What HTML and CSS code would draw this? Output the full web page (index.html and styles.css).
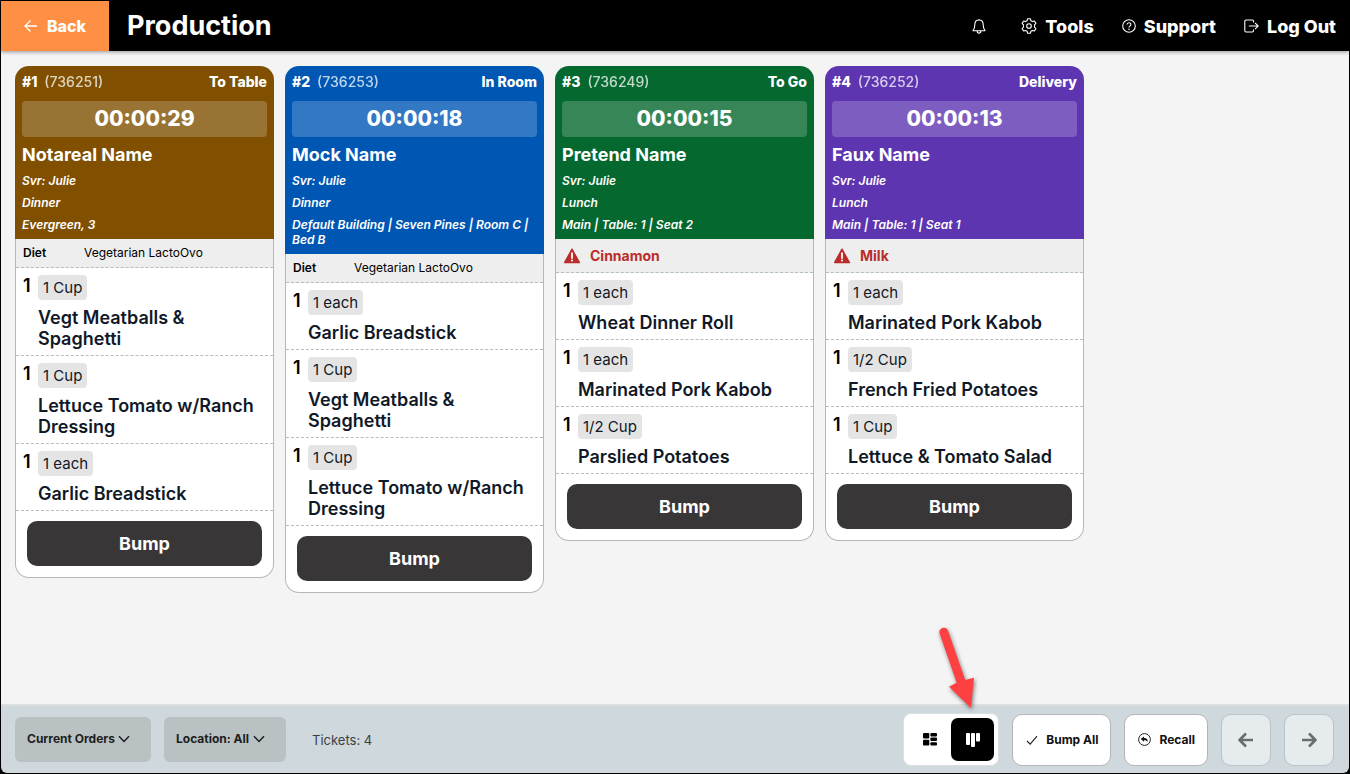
FILE: index.html
```html
<!DOCTYPE html>
<html lang="en">
<head>
    <meta charset="UTF-8">
    <meta name="viewport" content="width=device-width, initial-scale=1.0">
    <title>Production</title>
    <link rel="stylesheet" href="styles.css">
</head>
<body>
    <svg class="sprite" aria-hidden="true">
        <symbol id="warning" viewBox="0 0 18 16">
            <path d="M9 1.2 L16.4 14.6 H1.6 Z" fill="#b92d2b" stroke="#b92d2b" stroke-width="1.4" stroke-linejoin="round"/>
            <path d="M9 5.2 V10" stroke="#fff" stroke-width="1.8" stroke-linecap="round"/>
            <circle cx="9" cy="12.6" r="1" fill="#fff"/>
        </symbol>
        <symbol id="chevron" viewBox="0 0 12 8">
            <path d="M1 1.2 L6 6.4 L11 1.2" fill="none" stroke="#1c1e20" stroke-width="1.5"/>
        </symbol>
    </svg>

    <div class="app">
        <header class="topbar">
            <button class="back-button" type="button">
                <svg width="14" height="14" viewBox="0 0 14 14"><path d="M13 7 H1.5 M6.5 1.5 L1 7 L6.5 12.5" fill="none" stroke="#fff" stroke-width="1.3"/></svg>
                Back
            </button>
            <h1>Production</h1>
            <nav class="nav">
                <a class="bell" href="#" aria-label="Notifications">
                    <svg width="14" height="16" viewBox="0 0 14 16"><path d="M7 1 V2 M1 12.7 C2.4 11.2 2.8 9.8 2.8 6.8 C2.8 3.8 4.6 2 7 2 C9.4 2 11.2 3.8 11.2 6.8 C11.2 9.8 11.6 11.2 13 12.7 Z M5.2 13 C5.2 15.8 8.8 15.8 8.8 13" fill="none" stroke="#fff" stroke-width="1.1" stroke-linejoin="round"/></svg>
                </a>
                <a href="#">
                    <svg width="16" height="16" viewBox="0 0 16 16"><path d="M6.6 0.7 H9.4 L9.9 2.7 L11.5 3.6 L13.4 3 L14.9 5.4 L13.5 6.9 V9.1 L14.9 10.6 L13.4 13 L11.5 12.4 L9.9 13.3 L9.4 15.3 H6.6 L6.1 13.3 L4.5 12.4 L2.6 13 L1.1 10.6 L2.5 9.1 V6.9 L1.1 5.4 L2.6 3 L4.5 3.6 L6.1 2.7 Z" fill="none" stroke="#fff" stroke-width="1.1" stroke-linejoin="round"/><circle cx="8" cy="8" r="2.3" fill="none" stroke="#fff" stroke-width="1.1"/></svg>
                    Tools
                </a>
                <a href="#">
                    <svg width="14" height="14" viewBox="0 0 14 14"><circle cx="7" cy="7" r="6.3" fill="none" stroke="#fff" stroke-width="1.1"/><path d="M5.1 5.6 C5.1 3.1 8.9 3.1 8.9 5.5 C8.9 6.9 7 6.9 7 8.5" fill="none" stroke="#fff" stroke-width="1.1"/><circle cx="7" cy="10.3" r="0.8" fill="#fff"/></svg>
                    Support
                </a>
                <a href="#">
                    <svg width="15" height="14" viewBox="0 0 15 14"><path d="M9.5 3.6 V2.2 Q9.5 1 8.3 1 H2 Q0.8 1 0.8 2.2 V11.8 Q0.8 13 2 13 H8.3 Q9.5 13 9.5 11.8 V10.4 M4.8 7 H14 M11 3.8 L14.2 7 L11 10.2" fill="none" stroke="#fff" stroke-width="1.1"/></svg>
                    Log Out
                </a>
            </nav>
        </header>

        <main class="board">
            <article class="ticket to-table">
                <div class="ticket-head">
                    <div class="ticket-top"><b>#1</b><span class="order-id">(736251)</span><b class="service">To Table</b></div>
                    <div class="timer">00:00:29</div>
                    <h2>Notareal Name</h2>
                    <p>Svr: Julie</p>
                    <p>Dinner</p>
                    <p>Evergreen, 3</p>
                </div>
                <div class="ticket-body">
                    <div class="diet"><b>Diet</b><span>Vegetarian LactoOvo</span></div>
                    <div class="item">
                        <span class="qty">1</span>
                        <div><span class="portion">1 Cup</span><h3>Vegt Meatballs &amp; Spaghetti</h3></div>
                    </div>
                    <div class="item">
                        <span class="qty">1</span>
                        <div><span class="portion">1 Cup</span><h3>Lettuce Tomato w/Ranch Dressing</h3></div>
                    </div>
                    <div class="item">
                        <span class="qty">1</span>
                        <div><span class="portion">1 each</span><h3>Garlic Breadstick</h3></div>
                    </div>
                    <div class="ticket-action"><button class="bump" type="button">Bump</button></div>
                </div>
            </article>

            <article class="ticket in-room">
                <div class="ticket-head">
                    <div class="ticket-top"><b>#2</b><span class="order-id">(736253)</span><b class="service">In Room</b></div>
                    <div class="timer">00:00:18</div>
                    <h2>Mock Name</h2>
                    <p>Svr: Julie</p>
                    <p>Dinner</p>
                    <p>Default Building | Seven Pines | Room C | Bed B</p>
                </div>
                <div class="ticket-body">
                    <div class="diet"><b>Diet</b><span>Vegetarian LactoOvo</span></div>
                    <div class="item">
                        <span class="qty">1</span>
                        <div><span class="portion">1 each</span><h3>Garlic Breadstick</h3></div>
                    </div>
                    <div class="item">
                        <span class="qty">1</span>
                        <div><span class="portion">1 Cup</span><h3>Vegt Meatballs &amp; Spaghetti</h3></div>
                    </div>
                    <div class="item">
                        <span class="qty">1</span>
                        <div><span class="portion">1 Cup</span><h3>Lettuce Tomato w/Ranch Dressing</h3></div>
                    </div>
                    <div class="ticket-action"><button class="bump" type="button">Bump</button></div>
                </div>
            </article>

            <article class="ticket to-go">
                <div class="ticket-head">
                    <div class="ticket-top"><b>#3</b><span class="order-id">(736249)</span><b class="service">To Go</b></div>
                    <div class="timer">00:00:15</div>
                    <h2>Pretend Name</h2>
                    <p>Svr: Julie</p>
                    <p>Lunch</p>
                    <p>Main | Table: 1 | Seat 2</p>
                </div>
                <div class="ticket-body">
                    <div class="allergy"><svg width="18" height="16"><use href="#warning"/></svg>Cinnamon</div>
                    <div class="item">
                        <span class="qty">1</span>
                        <div><span class="portion">1 each</span><h3>Wheat Dinner Roll</h3></div>
                    </div>
                    <div class="item">
                        <span class="qty">1</span>
                        <div><span class="portion">1 each</span><h3>Marinated Pork Kabob</h3></div>
                    </div>
                    <div class="item">
                        <span class="qty">1</span>
                        <div><span class="portion">1/2 Cup</span><h3>Parslied Potatoes</h3></div>
                    </div>
                    <div class="ticket-action"><button class="bump" type="button">Bump</button></div>
                </div>
            </article>

            <article class="ticket delivery">
                <div class="ticket-head">
                    <div class="ticket-top"><b>#4</b><span class="order-id">(736252)</span><b class="service">Delivery</b></div>
                    <div class="timer">00:00:13</div>
                    <h2>Faux Name</h2>
                    <p>Svr: Julie</p>
                    <p>Lunch</p>
                    <p>Main | Table: 1 | Seat 1</p>
                </div>
                <div class="ticket-body">
                    <div class="allergy"><svg width="18" height="16"><use href="#warning"/></svg>Milk</div>
                    <div class="item">
                        <span class="qty">1</span>
                        <div><span class="portion">1 each</span><h3>Marinated Pork Kabob</h3></div>
                    </div>
                    <div class="item">
                        <span class="qty">1</span>
                        <div><span class="portion">1/2 Cup</span><h3>French Fried Potatoes</h3></div>
                    </div>
                    <div class="item">
                        <span class="qty">1</span>
                        <div><span class="portion">1 Cup</span><h3>Lettuce &amp; Tomato Salad</h3></div>
                    </div>
                    <div class="ticket-action"><button class="bump" type="button">Bump</button></div>
                </div>
            </article>
        </main>

        <footer class="bottombar">
            <div class="dropdown">
                <select aria-label="Orders"><option>Current Orders</option></select>
                <svg width="12" height="8"><use href="#chevron"/></svg>
            </div>
            <div class="dropdown">
                <select aria-label="Location"><option>Location: All</option></select>
                <svg width="12" height="8"><use href="#chevron"/></svg>
            </div>
            <span class="count">Tickets: 4</span>

            <div class="view-switch">
                <button type="button" aria-label="Grid view">
                    <svg width="14" height="13" viewBox="0 0 14 13"><rect width="6.3" height="5.6" rx="1"/><rect y="6.8" width="6.3" height="5.8" rx="1"/><rect x="7.4" width="6.6" height="3.4" rx="1"/><rect x="7.4" y="4.6" width="6.6" height="3.4" rx="1"/><rect x="7.4" y="9.2" width="6.6" height="3.4" rx="1"/></svg>
                </button>
                <button class="active" type="button" aria-label="Column view" aria-pressed="true">
                    <svg width="14" height="14" viewBox="0 0 14 14" fill="#fff"><rect width="4" height="12" rx="1"/><rect x="5" width="4" height="14" rx="1"/><rect x="10" width="4" height="8.6" rx="1"/></svg>
                </button>
                <svg class="pointer" width="50" height="90" viewBox="0 0 50 90"><path d="M9.6 13.6 A4.4 4.4 0 0 1 17.9 10.6 L35.3 60 L44 57.7 L41 88 L19 66.7 L26.7 62.7 Z" fill="#fd4142"/></svg>
            </div>
            <button class="action" type="button">
                <svg width="12" height="12" viewBox="0 0 12 12"><path d="M1 7 L4.2 10.2 L11 2.2" fill="none" stroke="#222" stroke-width="1.1"/></svg>
                Bump All
            </button>
            <button class="action" type="button">
                <svg width="13" height="13" viewBox="0 0 13 13"><circle cx="6.5" cy="6.5" r="5.9" fill="none" stroke="#222" stroke-width="1"/><path d="M2.8 6 L6 3.4 V5 C8.8 5 9.8 6.6 9.8 9.2 C9 7.7 8 7.2 6 7.2 V8.7 Z" fill="#111"/></svg>
                Recall
            </button>
            <button class="page-button" type="button" aria-label="Previous page" disabled>
                <svg width="16" height="16" viewBox="0 0 16 16"><path d="M15 8 H1.5 M8 1.5 L1.5 8 L8 14.5" fill="none" stroke="#686c6e" stroke-width="2.5" stroke-linejoin="round"/></svg>
            </button>
            <button class="page-button" type="button" aria-label="Next page" disabled>
                <svg width="16" height="16" viewBox="0 0 16 16"><path d="M1 8 H14.5 M8 1.5 L14.5 8 L8 14.5" fill="none" stroke="#686c6e" stroke-width="2.5" stroke-linejoin="round"/></svg>
            </button>
        </footer>
    </div>
</body>
</html>
```
FILE: styles.css
```css
* {
    box-sizing: border-box;
}
html {
    background: #000;
}
body {
    margin: 0;
    font-family: Inter, "Liberation Sans", sans-serif;
    color: #000;
}
button,
select {
    font-family: inherit;
    margin: 0;
    cursor: pointer;
}
h1,
h2,
h3,
p {
    margin: 0;
}
svg {
    flex: none;
}
.sprite {
    display: none;
}
.app {
    display: flex;
    flex-direction: column;
    min-height: 100vh;
    border: 1px solid #000;
}

/* top bar */
.topbar {
    display: flex;
    align-items: center;
    height: 50px;
    background: #000;
    color: #fff;
    box-shadow: 0 1px 4px rgba(0, 0, 0, 0.4);
    position: relative;
}
.back-button {
    display: flex;
    align-items: center;
    justify-content: center;
    gap: 9px;
    width: 108px;
    height: 100%;
    border: none;
    background: #ff8f45;
    color: #fff;
    font-size: 16px;
    font-weight: 800;
}
.topbar h1 {
    margin-left: 18px;
    font-size: 27px;
    line-height: 50px;
}
.nav {
    display: flex;
    align-items: center;
    gap: 28px;
    margin-left: auto;
    padding-right: 13px;
}
.nav a {
    display: flex;
    align-items: center;
    gap: 8px;
    color: #fff;
    font-size: 18px;
    font-weight: 800;
    text-decoration: none;
}
.nav .bell {
    margin-right: 7px;
}

/* tickets */
.board {
    flex: 1;
    display: flex;
    flex-wrap: wrap;
    align-items: flex-start;
    gap: 11px;
    padding: 15px 14px;
    background: #f4f4f4;
}
.ticket {
    width: 259px;
}
.ticket-head {
    padding: 5px 7px 7px;
    border-radius: 14px 14px 0 0;
    color: #fff;
}
.to-table .ticket-head {
    background: #805000;
}
.in-room .ticket-head {
    background: #0057b3;
}
.to-go .ticket-head {
    background: #04682f;
}
.delivery .ticket-head {
    background: #5e35b1;
}
.ticket-top {
    display: flex;
    gap: 7px;
    margin-bottom: 8px;
    font-size: 14px;
    line-height: 22px;
}
.ticket-top b {
    font-weight: 800;
}
.order-id {
    font-weight: 500;
    opacity: 0.75;
}
.service {
    margin-left: auto;
}
.timer {
    border-radius: 4px;
    background: rgba(255, 255, 255, 0.2);
    font-size: 21px;
    font-weight: 800;
    line-height: 36px;
    text-align: center;
}
.ticket-head h2 {
    margin-top: 7px;
    font-size: 18px;
    line-height: 22px;
}
.ticket-head p {
    margin-top: 7px;
    font-size: 12px;
    font-style: italic;
    font-weight: 600;
    line-height: 15px;
}
.ticket-body {
    border: 1px solid #b5b7b8;
    border-top: none;
    border-radius: 0 0 14px 14px;
    background: #fff;
}
.diet,
.allergy,
.item {
    display: flex;
    border-bottom: 1px dashed #b0bec5;
}
.diet,
.allergy {
    align-items: center;
    background: #eee;
}
.diet {
    padding: 0 7px;
    font-size: 12px;
    line-height: 28px;
}
.diet b {
    width: 61px;
    font-weight: 600;
}
.allergy {
    gap: 9px;
    padding: 0 7px;
    color: #b92d2b;
    font-size: 14px;
    font-weight: 700;
    line-height: 33px;
}
.item {
    padding: 7px 7px 6px;
}
.qty {
    flex: none;
    width: 15px;
    font-size: 18px;
    font-weight: 600;
    line-height: 22px;
}
.portion {
    display: inline-block;
    margin-bottom: 7px;
    padding: 0 5px;
    border-radius: 4px;
    background: #e4e4e4;
    color: #111827;
    font-size: 15px;
    line-height: 25px;
    vertical-align: top;
}
.item h3 {
    color: #111827;
    font-size: 18px;
    font-weight: 600;
    line-height: 21px;
}
.ticket-action {
    padding: 10px 11px 11px;
}
.bump {
    display: block;
    width: 100%;
    height: 45px;
    border: none;
    border-radius: 10px;
    background: #393637;
    color: #fff;
    font-size: 18px;
    font-weight: 700;
}

/* bottom bar */
.bottombar {
    display: flex;
    align-items: center;
    gap: 13px;
    padding: 7px 15px 7px 14px;
    border-top: 2px solid #dcdfe0;
    border-radius: 0 0 6px 6px;
    background: #cfd8dd;
}
.dropdown {
    position: relative;
}
.dropdown select {
    appearance: none;
    height: 45px;
    padding: 0 36px 2px 12px;
    border: none;
    border-radius: 6px;
    background: #b9c1c3;
    color: #1c1e20;
    font-size: 12px;
    font-weight: 700;
}
.dropdown svg {
    position: absolute;
    top: 18px;
    right: 21px;
    pointer-events: none;
}
.count {
    margin-left: 13px;
    color: #3c4043;
    font-size: 13px;
}
.view-switch {
    position: relative;
    display: flex;
    margin-left: auto;
    padding: 4px;
    border: 1px solid #dcdfe0;
    border-radius: 8px;
    background: #fff;
}
.view-switch button {
    display: flex;
    align-items: center;
    justify-content: center;
    width: 43px;
    height: 43px;
    padding: 0;
    border: none;
    border-radius: 7px;
    background: #fff;
}
.view-switch .active {
    background: #000;
}
.pointer {
    position: absolute;
    right: 18px;
    bottom: 55px;
    filter: drop-shadow(1px 2px 2px rgba(0, 0, 0, 0.5));
    pointer-events: none;
}
.action,
.page-button {
    display: flex;
    align-items: center;
    justify-content: center;
    height: 52px;
    border: 1px solid #b3b5b6;
    border-radius: 10px;
    background: #fff;
}
.action {
    gap: 8px;
    padding: 0 12px 0 13px;
    color: #111;
    font-size: 12px;
    font-weight: 700;
}
.page-button {
    width: 50px;
    border-color: #bcc3c6;
    background: #e6ebed;
}
```
